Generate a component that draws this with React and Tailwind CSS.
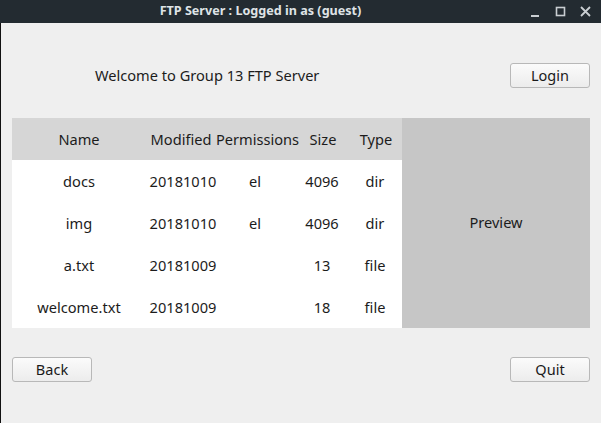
const rows = [
  { name: 'docs', modified: '20181010', perm: 'el', size: '4096', type: 'dir' },
  { name: 'img', modified: '20181010', perm: 'el', size: '4096', type: 'dir' },
  { name: 'a.txt', modified: '20181009', perm: '', size: '13', type: 'file' },
  { name: 'welcome.txt', modified: '20181009', perm: '', size: '18', type: 'file' },
];

function Btn({ children }) {
  return (
    <button className="w-[80px] h-[25px] rounded-[3px] border border-[#b8b8b8] bg-gradient-to-b from-[#fbfbfb] to-[#ececec] text-[14.5px] text-[#1a1a1a] leading-none">
      {children}
    </button>
  );
}

export default function App() {
  return (
    <div
      className="w-[601px] h-[423px] flex flex-col bg-[#efefef] text-[#1c1c1c] overflow-hidden"
      style={{ fontFamily: '"Noto Sans", "Open Sans", sans-serif' }}
    >
      {/* Title bar */}
      <div className="h-[23px] bg-[#232b31] flex items-center relative shrink-0">
        <div className="w-full pr-[80px] text-center text-[12.6px] font-bold text-[#dfe3e6] leading-none">
          FTP Server : Logged in as (guest)
        </div>
        <div className="absolute right-[10px] top-0 h-full flex items-center gap-[14px] text-[#c9ced2]">
          <svg width="11" height="11" viewBox="0 0 11 11"><rect x="1" y="9" width="8" height="2" fill="currentColor" /></svg>
          <svg width="11" height="11" viewBox="0 0 11 11"><rect x="1.5" y="1.5" width="8" height="8" fill="none" stroke="currentColor" strokeWidth="1.6" /></svg>
          <svg width="11" height="11" viewBox="0 0 11 11"><path d="M1 1 L10 10 M10 1 L1 10" stroke="currentColor" strokeWidth="1.8" /></svg>
        </div>
      </div>

      <div className="flex-1 flex flex-col border-l border-[#111]">
        {/* Header row */}
        <div className="flex items-center justify-between pt-[40px] pl-[94px] pr-[11px]">
          <span className="text-[14.6px]">Welcome to Group 13 FTP Server</span>
          <Btn>Login</Btn>
        </div>

        {/* Table + preview */}
        <div className="flex mt-[30px] ml-[11px] mr-[11px] h-[210px]">
          <div className="w-[390px] flex flex-col bg-white text-[14.6px]">
            <div className="h-[42px] pt-[2px] bg-[#d6d6d6] grid grid-cols-[134px_70px_76px_62px_44px] items-center text-center whitespace-nowrap">
              <span>Name</span>
              <span>Modified</span>
              <span>Permissions</span>
              <span>Size</span>
              <span>Type</span>
            </div>
            {rows.map((r) => (
              <div key={r.name} className="h-[42px] pt-[2px] grid grid-cols-[134px_74px_70px_64px_42px] items-center text-center">
                <span>{r.name}</span>
                <span>{r.modified}</span>
                <span>{r.perm}</span>
                <span>{r.size}</span>
                <span>{r.type}</span>
              </div>
            ))}
          </div>
          <div className="flex-1 bg-[#c6c6c6] flex items-center justify-center text-[14.6px]">
            Preview
          </div>
        </div>

        {/* Bottom buttons */}
        <div className="flex justify-between mt-[29px] pl-[11px] pr-[11px]">
          <Btn>Back</Btn>
          <Btn>Quit</Btn>
        </div>
      </div>
    </div>
  );
}
